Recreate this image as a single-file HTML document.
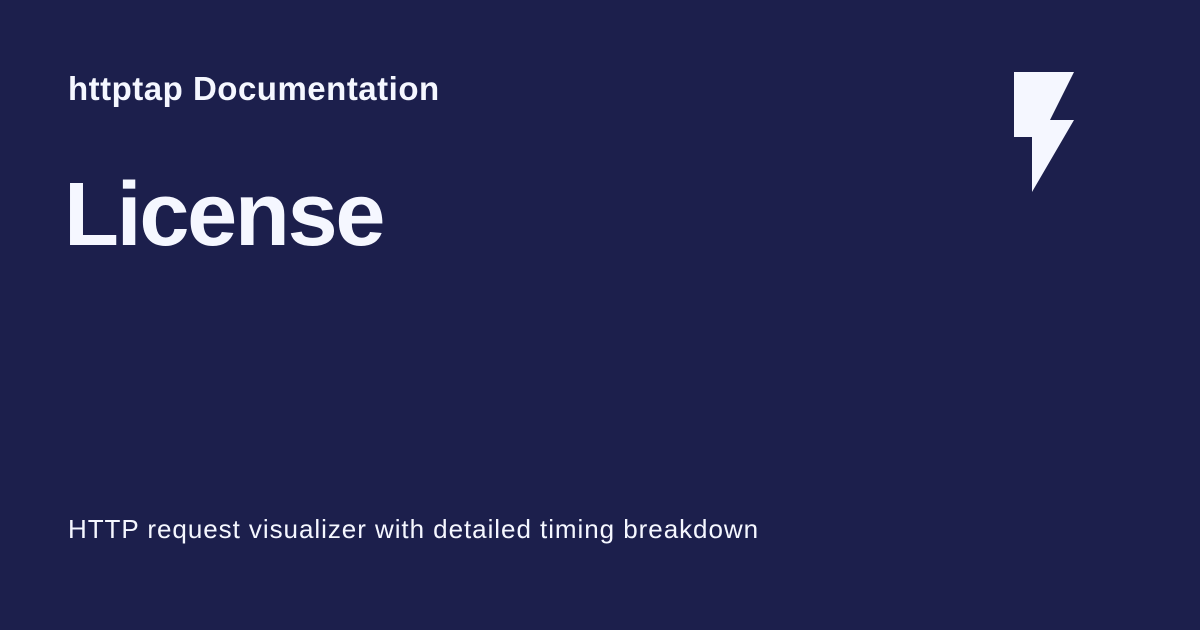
<!DOCTYPE html>
<html><head><meta charset="utf-8"><style>
html,body{margin:0;padding:0}
body{width:1200px;height:630px;background:#1c1f4c;position:relative;overflow:hidden;font-family:"Liberation Sans",sans-serif;color:#f5f7ff}
.t1{position:absolute;left:68px;top:70px;font-size:33px;font-weight:bold;letter-spacing:0.5px}
.t2{position:absolute;left:64px;top:164px;font-size:90px;font-weight:bold;letter-spacing:-2.3px}
.t3{position:absolute;left:68px;top:514px;font-size:26px;letter-spacing:0.95px}
</style></head><body>
<div class="t1">httptap Documentation</div>
<div class="t2">License</div>
<div class="t3">HTTP request visualizer with detailed timing breakdown</div>
<svg style="position:absolute;left:0;top:0" width="1200" height="630"><polygon points="1014,72 1074,72 1050,120 1074,120 1032,192 1032,137 1014,137" fill="#f5f7ff"/></svg>
</body></html>
